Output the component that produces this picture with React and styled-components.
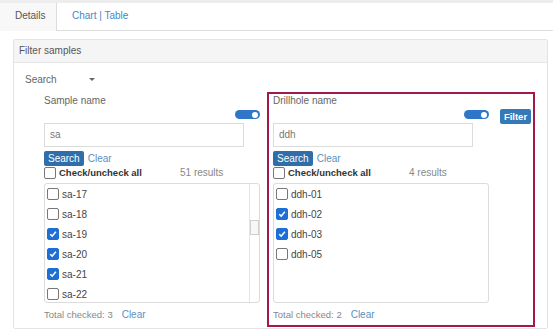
import React from "react";
import styled, { createGlobalStyle } from "styled-components";

const GlobalStyle = createGlobalStyle`
  body {
    margin: 0;
    background: #ffffff;
    font-family: "Liberation Sans", Arial, sans-serif;
  }
`;

// Tabs
const TabBar = styled.div`
  display: flex;
  height: 27px;
  border-top: 3px solid #ededed;
  border-bottom: 1px solid #dedede;
  background: #ffffff;
`;

const Tab = styled.div`
  width: ${({ $active }) => ($active ? "57px" : "auto")};
  box-sizing: border-box;
  padding-left: 15px;
  line-height: 26px;
  font-size: 10px;
  color: ${({ $active }) => ($active ? "#555" : "#4a86c5")};
  background: ${({ $active }) => ($active ? "#f8f8f8" : "transparent")};
  border-right: ${({ $active }) => ($active ? "1px solid #dcdcdc" : "none")};
  margin-bottom: ${({ $active }) => ($active ? "-1px" : "0")};
  height: ${({ $active }) => ($active ? "28px" : "27px")};
`;

// Panel
const Panel = styled.div`
  margin: 8px 5px 0 13px;
  border: 1px solid #e3e3e3;
  border-radius: 2px;
  background: #fff;
`;

const PanelHeading = styled.div`
  height: 22px;
  line-height: 22px;
  padding-left: 5px;
  font-size: 10px;
  color: #555;
  background: #f5f5f5;
  border-bottom: 1px solid #e6e6e6;
`;

const PanelBody = styled.div`
  padding: 8px 0 1px 11px;
`;

const ModeSelect = styled.div`
  display: flex;
  align-items: center;
  height: 16px;
  font-size: 10px;
  color: #666;
`;

const Caret = styled.span`
  margin-left: 32px;
  width: 0;
  height: 0;
  border-left: 3px solid transparent;
  border-right: 3px solid transparent;
  border-top: 3px solid #666;
`;

const Columns = styled.div`
  display: flex;
  gap: 3px;
  margin: 5px 0 0 13px;
`;

const Column = styled.div`
  width: ${({ $w }) => $w}px;
  box-sizing: border-box;
  border: 2px solid ${({ $highlight }) => ($highlight ? "#a3194d" : "transparent")};
  padding: 1px 2px 3px 4px;
`;

const Label = styled.div`
  height: 12px;
  line-height: 12px;
  font-size: 10px;
  color: #666;
`;

const ToggleRow = styled.div`
  display: flex;
  align-items: flex-start;
  height: 15px;
  margin-top: 2px;
`;

const ToggleSlot = styled.div`
  width: 216px;
  display: flex;
  justify-content: flex-end;
`;

const Toggle = styled.div`
  width: 25px;
  height: 9px;
  margin-top: 1px;
  border-radius: 5px;
  background: #2f76c9;
  display: flex;
  align-items: center;
  justify-content: flex-end;
  padding-right: 2px;
  box-sizing: border-box;
  &::after {
    content: "";
    width: 6px;
    height: 6px;
    border-radius: 50%;
    background: #fff;
  }
`;

const FilterButton = styled.div`
  margin-left: 11px;
  width: 31px;
  height: 15px;
  line-height: 15px;
  border-radius: 2px;
  background: #3479b8;
  color: #fff;
  font-size: 9.5px;
  font-weight: bold;
  text-align: center;
`;

const TextInput = styled.div`
  margin-top: -1px;
  width: 200px;
  height: 24px;
  box-sizing: border-box;
  border: 1px solid #dcdcdc;
  padding-left: 5px;
  line-height: 22px;
  font-size: 10px;
  color: #777;
`;

const ButtonRow = styled.div`
  display: flex;
  align-items: center;
  margin-top: 4px;
  height: 15px;
`;

const SearchButton = styled.div`
  height: 15px;
  line-height: 15px;
  padding: 0 4px;
  border-radius: 2px;
  background: #2f6eaa;
  color: #fff;
  font-size: 10px;
`;

const LinkText = styled.span`
  margin-left: ${({ $gap }) => $gap || 4}px;
  font-size: 10px;
  color: #5d8fc0;
`;

const CheckAllRow = styled.div`
  display: flex;
  align-items: center;
  height: 13px;
  margin-top: 0;
`;

const CheckAllLabel = styled.span`
  width: 121px;
  margin-left: 3px;
  font-size: 9.5px;
  font-weight: bold;
  color: #333;
`;

const Results = styled.span`
  font-size: 10px;
  color: #888;
`;

const Box = styled.span`
  width: 10px;
  height: 10px;
  flex: none;
  border-radius: 2px;
  border: 1px solid ${({ $checked }) => ($checked ? "#1d6fd6" : "#777")};
  background: ${({ $checked }) => ($checked ? "#1d6fd6" : "#fff")};
  display: flex;
  align-items: center;
  justify-content: center;
`;

const List = styled.div`
  display: flex;
  margin-top: 4px;
  width: 216px;
  height: 120px;
  box-sizing: border-box;
  border: 1px solid #dcdcdc;
  border-radius: 3px;
  overflow: hidden;
`;

const Items = styled.div`
  flex: 1;
  padding: 0 0 0 2px;
`;

const Item = styled.div`
  display: flex;
  align-items: center;
  height: 20px;
  font-size: 10px;
  color: #444;
`;

const ItemText = styled.span`
  margin-left: 3px;
`;

const Scrollbar = styled.div`
  width: 9px;
  border-left: 1px solid #e6e6e6;
  padding-top: 36px;
`;

const Thumb = styled.div`
  width: 7px;
  height: 13px;
  border: 1px solid #cfcfcf;
  background: #f7f7f7;
`;

const TotalRow = styled.div`
  margin-top: 5px;
  height: 14px;
  line-height: 14px;
  font-size: 9.5px;
  color: #888;
`;

const Check = ({ checked }) => (
  <Box $checked={checked}>
    {checked && (
      <svg width="8" height="8" viewBox="0 0 8 8">
        <path d="M1.2 4.2 L3.2 6.1 L6.9 1.8" fill="none" stroke="#fff" strokeWidth="1.5" />
      </svg>
    )}
  </Box>
);

const FilterColumn = ({ width, highlight, label, query, count, items, total, scroll, filter }) => (
  <Column $w={width} $highlight={highlight}>
    <Label>{label}</Label>
    <ToggleRow>
      <ToggleSlot>
        <Toggle />
      </ToggleSlot>
      {filter && <FilterButton>Filter</FilterButton>}
    </ToggleRow>
    <TextInput>{query}</TextInput>
    <ButtonRow>
      <SearchButton>Search</SearchButton>
      <LinkText>Clear</LinkText>
    </ButtonRow>
    <CheckAllRow>
      <Check />
      <CheckAllLabel>Check/uncheck all</CheckAllLabel>
      <Results>{count} results</Results>
    </CheckAllRow>
    <List>
      <Items>
        {items.map(([name, on]) => (
          <Item key={name}>
            <Check checked={on} />
            <ItemText>{name}</ItemText>
          </Item>
        ))}
      </Items>
      {scroll && (
        <Scrollbar>
          <Thumb />
        </Scrollbar>
      )}
    </List>
    <TotalRow>
      Total checked: {total}
      <LinkText $gap={9}>Clear</LinkText>
    </TotalRow>
  </Column>
);

const samples = [
  ["sa-17", false],
  ["sa-18", false],
  ["sa-19", true],
  ["sa-20", true],
  ["sa-21", true],
  ["sa-22", false],
];

const holes = [
  ["ddh-01", false],
  ["ddh-02", true],
  ["ddh-03", true],
  ["ddh-05", false],
];

export default function App() {
  return (
    <>
      <GlobalStyle />
      <TabBar>
        <Tab $active>Details</Tab>
        <Tab>Chart | Table</Tab>
      </TabBar>
      <Panel>
        <PanelHeading>Filter samples</PanelHeading>
        <PanelBody>
          <ModeSelect>
            Search
            <Caret />
          </ModeSelect>
          <Columns>
            <FilterColumn
              width={226}
              label="Sample name"
              query="sa"
              count={51}
              items={samples}
              total={3}
              scroll
            />
            <FilterColumn
              width={268}
              highlight
              label="Drillhole name"
              query="ddh"
              count={4}
              items={holes}
              total={2}
              filter
            />
          </Columns>
        </PanelBody>
      </Panel>
    </>
  );
}
